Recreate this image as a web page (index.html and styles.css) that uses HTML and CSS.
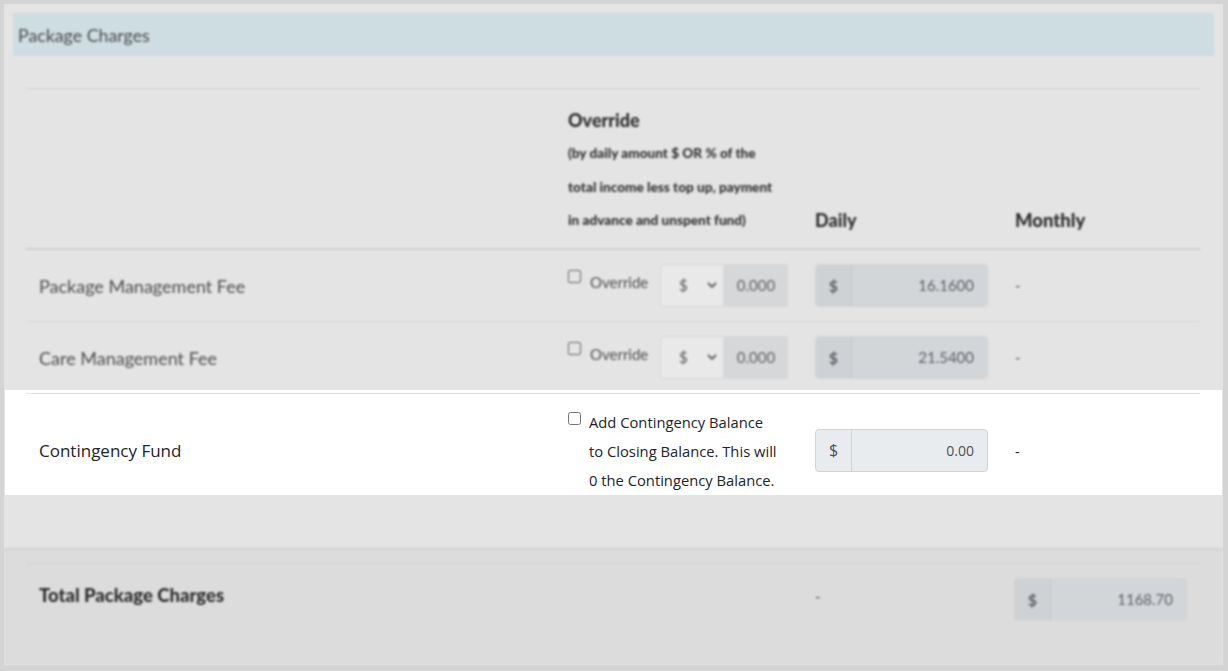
FILE: index.html
```html
<!DOCTYPE html>
<html>
<head>
    <meta charset="UTF-8">
    <title>Package Charges</title>
    <link rel="stylesheet" href="styles.css">
</head>
<body>
    <div class="panel">
        <div class="dim">
            <div class="panel-heading">Package Charges</div>

            <div class="charges">
                <div class="row head-row">
                    <div class="cell"></div>
                    <div class="cell override-head">
                        <div class="th-title">Override</div>
                        <div class="th-note">(by daily amount $ OR % of the<br>total income less top up, payment<br>in advance and unspent fund)</div>
                    </div>
                    <div class="cell col-head th-title">Daily</div>
                    <div class="cell col-head th-title">Monthly</div>
                </div>

                <div class="row fee-row">
                    <div class="cell label">Package Management Fee</div>
                    <div class="cell override-cell">
                        <label class="check"><span class="box"></span>Override</label>
                        <div class="override-group">
                            <div class="pick">$
                                <svg width="10" height="6" viewBox="0 0 10 6"><path d="M1 1l4 4 4-4" fill="none" stroke="#666" stroke-width="2"/></svg>
                            </div>
                            <div class="pick-value">0.000</div>
                        </div>
                    </div>
                    <div class="cell">
                        <div class="money dim-money"><span class="addon">$</span><span class="amount">16.1600</span></div>
                    </div>
                    <div class="cell dash">-</div>
                </div>

                <div class="row fee-row last">
                    <div class="cell label">Care Management Fee</div>
                    <div class="cell override-cell">
                        <label class="check"><span class="box"></span>Override</label>
                        <div class="override-group">
                            <div class="pick">$
                                <svg width="10" height="6" viewBox="0 0 10 6"><path d="M1 1l4 4 4-4" fill="none" stroke="#666" stroke-width="2"/></svg>
                            </div>
                            <div class="pick-value">0.000</div>
                        </div>
                    </div>
                    <div class="cell">
                        <div class="money dim-money"><span class="addon">$</span><span class="amount">21.5400</span></div>
                    </div>
                    <div class="cell dash">-</div>
                </div>
            </div>
        </div>

        <div class="spot">
            <div class="row spot-row">
                <div class="cell label">Contingency Fund</div>
                <div class="cell">
                    <label class="contingency">
                        <input type="checkbox" class="spot-check">
                        <span>Add Contingency Balance<br>to Closing Balance. This will<br>0 the Contingency Balance.</span>
                    </label>
                </div>
                <div class="cell">
                    <div class="money"><span class="addon">$</span><span class="amount">0.00</span></div>
                </div>
                <div class="cell dash">-</div>
            </div>
        </div>

        <div class="dim gap"></div>

        <div class="dim totals">
            <div class="row total-row">
                <div class="cell label strong">Total Package Charges</div>
                <div class="cell"></div>
                <div class="cell dash">-</div>
                <div class="cell">
                    <div class="money dim-money"><span class="addon">$</span><span class="amount">1168.70</span></div>
                </div>
            </div>
        </div>
    </div>
</body>
</html>
```

FILE: styles.css
```css
body {
    margin: 0;
    background-color: #d4d4d4;
    font-family: Lato, "Open Sans", sans-serif;
    height: 671px;
    overflow: hidden;
}
.panel {
    margin: 4px 5px 0 4px;
    height: 661px;
    background-color: #e4e4e4;
    display: flex;
    flex-direction: column;
}
.dim {
    filter: blur(0.8px);
    color: #4a4a4a;
}
.panel-heading {
    margin: 9px 9px 0 9px;
    height: 43px;
    line-height: 45px;
    padding-left: 5px;
    background-color: #cddde2;
    color: #4c4c4c;
    font-size: 17.8px;
}
.charges {
    margin: 32px 23px 0 22px;
    border-top: 1px solid #d3d3d3;
}
.row {
    display: grid;
    grid-template-columns: 529px 248px 200px 1fr;
}
.cell {
    padding: 0 12px;
}
.cell.label {
    padding-left: 13px;
}
.th-title {
    font-weight: 900;
    font-size: 18px;
    line-height: 24px;
    color: #2e2e2e;
}
.head-row {
    align-items: end;
    border-bottom: 2px solid #cfcfcf;
}
.override-head {
    padding: 19px 13px 10px 13px;
}
.th-note {
    margin-top: 5px;
    font-size: 13.6px;
    font-weight: 900;
    line-height: 33.5px;
    color: #333;
}
.col-head {
    padding-bottom: 16px;
}
.col-head:last-child {
    font-size: 18.5px;
}
.fee-row {
    padding: 14px 0;
    align-items: center;
    border-bottom: 1px solid #d6d6d6;
}
.fee-row.last {
    padding-bottom: 11px;
    border-bottom: none;
}
.label {
    font-size: 18px;
    color: #4e4e4e;
}
.fee-row .label {
    padding-top: 2px;
}
.override-cell {
    display: flex;
    align-items: flex-start;
    padding-left: 13px;
}
.check {
    display: flex;
    align-items: flex-start;
    font-size: 15px;
    color: #4e4e4e;
    width: 92px;
    line-height: 22px;
    padding-top: 7px;
}
.box {
    width: 11px;
    height: 11px;
    border: 1px solid #666;
    border-radius: 2px;
    margin: -1px 9px 0 0;
    flex: none;
}
.override-group {
    display: flex;
    height: 43px;
}
.pick {
    width: 64px;
    box-sizing: border-box;
    border: 1px solid #d6d6d6;
    border-radius: 4px 0 0 4px;
    background-color: #e9e9e9;
    display: flex;
    align-items: center;
    justify-content: space-between;
    padding: 0 6px 0 18px;
    font-size: 15px;
    color: #555;
}
.pick-value {
    width: 64px;
    background-color: #d5d7d9;
    border-radius: 0 4px 4px 0;
    line-height: 43px;
    text-align: center;
    font-size: 15px;
    color: #666;
}
.money {
    display: flex;
    width: 173px;
    height: 43px;
    box-sizing: border-box;
    border: 1px solid #ced4da;
    border-radius: 4px;
    background-color: #e9ecef;
    font-family: "Open Sans", sans-serif;
    font-size: 14px;
    color: #495057;
}
.money .addon {
    width: 35px;
    border-right: 1px solid #ced4da;
    text-align: center;
    line-height: 41px;
    font-size: 16px;
}
.money .amount {
    flex: 1;
    text-align: right;
    line-height: 41px;
    padding-right: 13px;
}
.dim-money {
    background-color: #d3d6d9;
    border-color: #cfd2d5;
    font-family: Lato, sans-serif;
    font-size: 15px;
    color: #5c6166;
}
.dim-money .addon {
    background-color: #cfd2d5;
    border-right-color: #c6c9cc;
    border-radius: 4px 0 0 4px;
    font-weight: bold;
}
.dash {
    font-size: 15px;
    color: #555;
}
.spot {
    background-color: #fff;
    margin: 0 1px;
    padding: 3px 22px 0 21px;
}
.spot-row {
    border-top: 1px solid #dee2e6;
    padding-top: 14px;
    align-items: center;
    font-family: "Open Sans", sans-serif;
    color: #212529;
}
.spot-row .label {
    color: #212529;
    font-size: 17px;
    padding-bottom: 1px;
}
.spot-row .dash {
    color: #212529;
    font-size: 14px;
}
.contingency {
    display: flex;
    align-items: flex-start;
    font-size: 14.75px;
    line-height: 29px;
    padding-left: 1px;
}
.spot-check {
    margin: 4px 8px 0 0;
    width: 13px;
    height: 13px;
}
.spot-row .money {
    margin-top: -1px;
}
.gap {
    height: 53px;
}
.totals {
    flex: 1;
    background-color: #dcdcdc;
    border-top: 2px solid #d0d0d0;
    padding: 13px 23px 0 22px;
}
.total-row {
    border-top: 1px solid #d0d0d0;
    padding-top: 14px;
    align-items: center;
}
.total-row .label {
    padding-bottom: 8px;
}
.total-row .dash {
    padding-bottom: 6px;
}
.strong {
    font-weight: 900;
    font-size: 18.5px;
    color: #2e2e2e;
}
.total-row .cell:last-child {
    padding-left: 11px;
}
```
